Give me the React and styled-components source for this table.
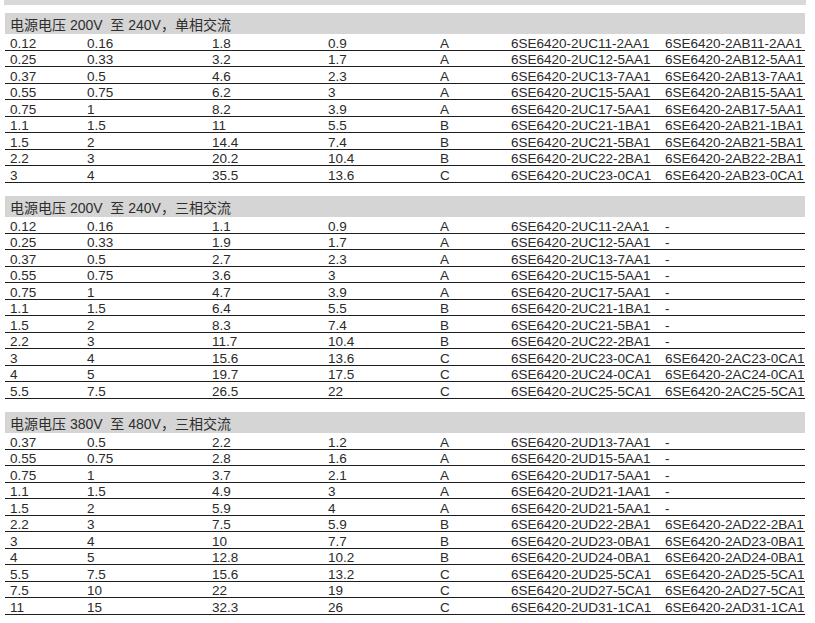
import React from "react";
import styled, { createGlobalStyle } from "styled-components";

const GlobalStyle = createGlobalStyle`
  html, body {
    margin: 0;
    padding: 0;
    background: #ffffff;
    color: #2a2a2a;
    font-family: "Liberation Sans", Arial, "Noto Sans CJK SC", sans-serif;
  }
`;

const Page = styled.div`
  width: 815px;
  padding: 0 0 0 5px;
  box-sizing: border-box;
`;

const TopBar = styled.div`
  width: 802px;
  height: 5px;
  margin-left: -1px;
  background: #d9d9d9;
`;

const Section = styled.div`
  width: 800px;
  margin-top: ${(p) => p.$gap}px;
`;

const Title = styled.div`
  height: 21px;
  box-sizing: border-box;
  padding: 3px 0 0 5px;
  background: #d5d5d5;
  font-size: 14px;
  line-height: 18px;
  color: #2e2e2e;
  white-space: pre;
`;

const Row = styled.div`
  display: grid;
  grid-template-columns: 77px 125px 116px 112px 71px 154px 1fr;
  height: 16.5px;
  box-sizing: border-box;
  padding: 2.5px 0 0 5px;
  border-bottom: 1px solid #1e1e1e;
  font-size: 13.5px;
  line-height: 13px;
  white-space: nowrap;
`;

const Cell = styled.span`
  overflow: visible;
`;

const sections = [
  {
    title: "电源电压 200V  至 240V，单相交流",
    rows: [
      ["0.12", "0.16", "1.8", "0.9", "A", "6SE6420-2UC11-2AA1", "6SE6420-2AB11-2AA1"],
      ["0.25", "0.33", "3.2", "1.7", "A", "6SE6420-2UC12-5AA1", "6SE6420-2AB12-5AA1"],
      ["0.37", "0.5", "4.6", "2.3", "A", "6SE6420-2UC13-7AA1", "6SE6420-2AB13-7AA1"],
      ["0.55", "0.75", "6.2", "3", "A", "6SE6420-2UC15-5AA1", "6SE6420-2AB15-5AA1"],
      ["0.75", "1", "8.2", "3.9", "A", "6SE6420-2UC17-5AA1", "6SE6420-2AB17-5AA1"],
      ["1.1", "1.5", "11", "5.5", "B", "6SE6420-2UC21-1BA1", "6SE6420-2AB21-1BA1"],
      ["1.5", "2", "14.4", "7.4", "B", "6SE6420-2UC21-5BA1", "6SE6420-2AB21-5BA1"],
      ["2.2", "3", "20.2", "10.4", "B", "6SE6420-2UC22-2BA1", "6SE6420-2AB22-2BA1"],
      ["3", "4", "35.5", "13.6", "C", "6SE6420-2UC23-0CA1", "6SE6420-2AB23-0CA1"],
    ],
  },
  {
    title: "电源电压 200V  至 240V，三相交流",
    rows: [
      ["0.12", "0.16", "1.1", "0.9", "A", "6SE6420-2UC11-2AA1", "-"],
      ["0.25", "0.33", "1.9", "1.7", "A", "6SE6420-2UC12-5AA1", "-"],
      ["0.37", "0.5", "2.7", "2.3", "A", "6SE6420-2UC13-7AA1", "-"],
      ["0.55", "0.75", "3.6", "3", "A", "6SE6420-2UC15-5AA1", "-"],
      ["0.75", "1", "4.7", "3.9", "A", "6SE6420-2UC17-5AA1", "-"],
      ["1.1", "1.5", "6.4", "5.5", "B", "6SE6420-2UC21-1BA1", "-"],
      ["1.5", "2", "8.3", "7.4", "B", "6SE6420-2UC21-5BA1", "-"],
      ["2.2", "3", "11.7", "10.4", "B", "6SE6420-2UC22-2BA1", "-"],
      ["3", "4", "15.6", "13.6", "C", "6SE6420-2UC23-0CA1", "6SE6420-2AC23-0CA1"],
      ["4", "5", "19.7", "17.5", "C", "6SE6420-2UC24-0CA1", "6SE6420-2AC24-0CA1"],
      ["5.5", "7.5", "26.5", "22", "C", "6SE6420-2UC25-5CA1", "6SE6420-2AC25-5CA1"],
    ],
  },
  {
    title: "电源电压 380V  至 480V，三相交流",
    rows: [
      ["0.37", "0.5", "2.2", "1.2", "A", "6SE6420-2UD13-7AA1", "-"],
      ["0.55", "0.75", "2.8", "1.6", "A", "6SE6420-2UD15-5AA1", "-"],
      ["0.75", "1", "3.7", "2.1", "A", "6SE6420-2UD17-5AA1", "-"],
      ["1.1", "1.5", "4.9", "3", "A", "6SE6420-2UD21-1AA1", "-"],
      ["1.5", "2", "5.9", "4", "A", "6SE6420-2UD21-5AA1", "-"],
      ["2.2", "3", "7.5", "5.9", "B", "6SE6420-2UD22-2BA1", "6SE6420-2AD22-2BA1"],
      ["3", "4", "10", "7.7", "B", "6SE6420-2UD23-0BA1", "6SE6420-2AD23-0BA1"],
      ["4", "5", "12.8", "10.2", "B", "6SE6420-2UD24-0BA1", "6SE6420-2AD24-0BA1"],
      ["5.5", "7.5", "15.6", "13.2", "C", "6SE6420-2UD25-5CA1", "6SE6420-2AD25-5CA1"],
      ["7.5", "10", "22", "19", "C", "6SE6420-2UD27-5CA1", "6SE6420-2AD27-5CA1"],
      ["11", "15", "32.3", "26", "C", "6SE6420-2UD31-1CA1", "6SE6420-2AD31-1CA1"],
    ],
  },
];

export default function App() {
  return (
    <Page>
      <GlobalStyle />
      <TopBar />
      {sections.map((s, i) => (
        <Section key={i} $gap={i === 0 ? 8 : 13.5}>
          <Title>{s.title}</Title>
          {s.rows.map((r, j) => (
            <Row key={j}>
              {r.map((c, k) => (
                <Cell key={k}>{c}</Cell>
              ))}
            </Row>
          ))}
        </Section>
      ))}
    </Page>
  );
}
